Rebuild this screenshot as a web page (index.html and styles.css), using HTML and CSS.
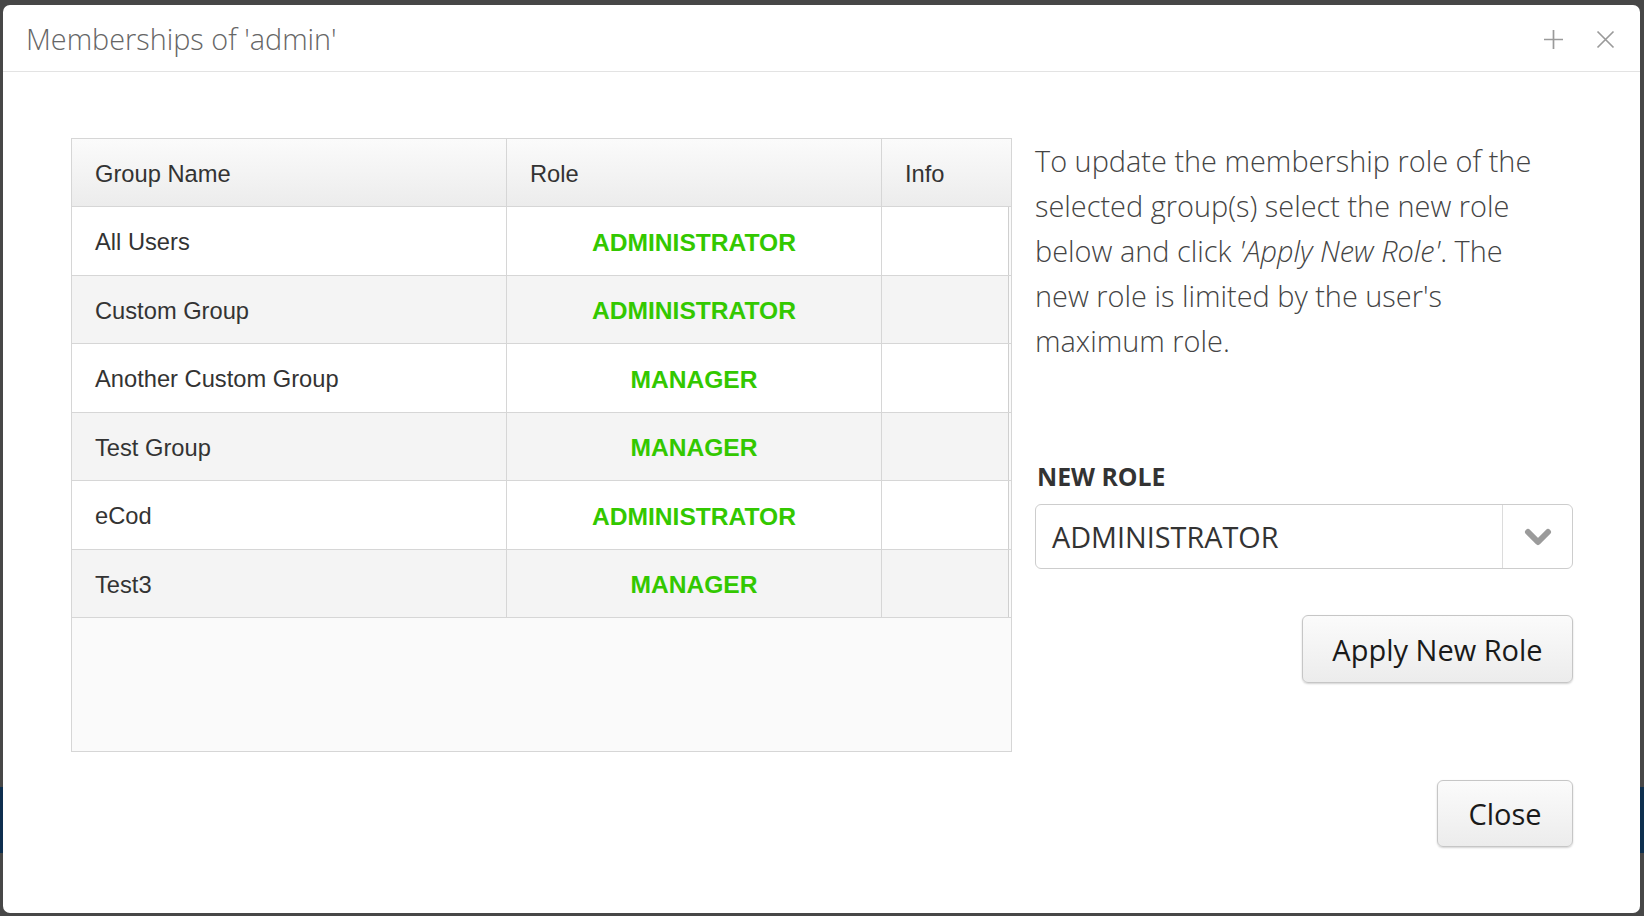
FILE: index.html
```html
<!DOCTYPE html>
<html lang="en">
<head>
<meta charset="utf-8">
<title>Memberships of 'admin'</title>
<link rel="stylesheet" href="styles.css">
</head>
<body>
<div class="modal">
  <div class="modal-header">
    <h1 class="modal-title">Memberships of 'admin'</h1>
    <div class="header-tools">
      <svg class="tool-icon" width="21" height="21" viewBox="0 0 21 21"><path d="M10.5 1v19M1 10.5h19" stroke="#9a9a9a" stroke-width="1.7" fill="none"/></svg>
      <svg class="tool-icon" width="19" height="19" viewBox="0 0 19 19"><path d="M1.5 1.5l16 16M17.5 1.5l-16 16" stroke="#9a9a9a" stroke-width="1.7" fill="none"/></svg>
    </div>
  </div>
  <div class="modal-body">
    <div class="table-box">
      <table class="groups">
        <colgroup><col class="c1"><col class="c2"><col class="c3"></colgroup>
        <thead>
          <tr><th>Group Name</th><th>Role</th><th>Info</th></tr>
        </thead>
        <tbody>
          <tr><td>All Users</td><td class="role">ADMINISTRATOR</td><td class="info"></td></tr>
          <tr><td>Custom Group</td><td class="role">ADMINISTRATOR</td><td class="info"></td></tr>
          <tr><td>Another Custom Group</td><td class="role">MANAGER</td><td class="info"></td></tr>
          <tr><td>Test Group</td><td class="role">MANAGER</td><td class="info"></td></tr>
          <tr><td>eCod</td><td class="role">ADMINISTRATOR</td><td class="info"></td></tr>
          <tr><td>Test3</td><td class="role">MANAGER</td><td class="info"></td></tr>
        </tbody>
      </table>
    </div>
    <div class="side">
      <p class="help">To update the membership role of the selected group(s) select the new role below and click <em>'Apply New Role'</em>. The new role is limited by the user's maximum role.</p>
      <div class="field-label">NEW ROLE</div>
      <div class="select">
        <span class="select-value">ADMINISTRATOR</span>
        <span class="select-arrow">
          <svg width="30" height="20" viewBox="0 0 30 20"><path d="M5 5l10 10 10-10" stroke="#9b9b9b" stroke-width="6" stroke-linecap="round" stroke-linejoin="round" fill="none"/></svg>
        </span>
      </div>
      <div class="side-actions">
        <button class="btn btn-apply">Apply New Role</button>
      </div>
    </div>
  </div>
  <div class="modal-footer">
    <button class="btn btn-close">Close</button>
  </div>
</div>
</body>
</html>
```

FILE: styles.css
```css
* { box-sizing: border-box; }

html, body { height: 100%; }

body {
  margin: 0;
  background: linear-gradient(to bottom, #474747 0, #474747 787px, #0e2f4f 787px, #0e2f4f 853px, #474747 853px);
  font-family: "Open Sans", "Liberation Sans", sans-serif;
  overflow: hidden;
}

.modal {
  margin: 5px 4px 0 3px;
  width: 1637px;
  height: 908px;
  background: #fff;
  border-radius: 7px;
  display: flex;
  flex-direction: column;
}

.modal-header {
  height: 67px;
  border-bottom: 1px solid #e3e3e3;
  display: flex;
  align-items: center;
  justify-content: space-between;
  padding: 0 25px 0 23px;
  flex: none;
}

.modal-title {
  margin: 0;
  font-weight: 300;
  font-size: 28.8px;
  color: #666;
}

.header-tools {
  display: flex;
  align-items: center;
  gap: 32px;
  padding-top: 2px;
}

.tool-icon { display: block; }

.modal-body {
  display: flex;
  gap: 23px;
  padding: 66px 67px 0 68px;
  flex: none;
}

.table-box {
  width: 941px;
  height: 614px;
  border: 1px solid #d6d6d6;
  background: #fafafa;
  flex: none;
}

.groups {
  width: 100%;
  border-collapse: separate;
  border-spacing: 0;
  table-layout: fixed;
  font-family: "Liberation Sans", Arial, sans-serif;
  font-size: 23.7px;
  color: #333;
}

.c1 { width: 435px; }
.c2 { width: 375px; }

.groups th,
.groups td {
  height: 68.5px;
  padding: 4px 0 0 23px;
  border-right: 1px solid #d6d6d6;
  border-bottom: 1px solid #d6d6d6;
  text-align: left;
  vertical-align: middle;
  font-weight: normal;
}

.groups th:last-child { border-right: none; }

.groups thead th {
  height: 68px;
  background: linear-gradient(to bottom, #fbfbfb, #ececec);
}

.groups tbody tr:nth-child(odd) td { background-color: #fff; }
.groups tbody tr:nth-child(even) td { background-color: #f4f4f4; }

.groups td.role {
  text-align: center;
  padding: 4px 0 0 0;
  font-weight: bold;
  font-size: 24.6px;
  color: #33c800;
}

.groups td.info {
  border-right: none;
  box-shadow: inset -2px 0 0 #fafafa, inset -3px 0 0 #cfcfcf;
}

.side {
  width: 538px;
  flex: none;
  display: flex;
  flex-direction: column;
}

.help {
  margin: 0;
  max-width: 510px;
  font-size: 28.9px;
  font-weight: 300;
  line-height: 45px;
  color: #444;
}

.help em { font-style: italic; }

.field-label {
  margin-top: 98px;
  margin-bottom: 13px;
  padding-left: 2px;
  font-size: 24.8px;
  line-height: 30px;
  font-weight: 700;
  color: #333;
}

.select {
  height: 65px;
  border: 1px solid #cdcdcd;
  border-radius: 6px;
  display: flex;
  align-items: stretch;
  background: #fff;
}

.select-value {
  flex: 1;
  display: flex;
  align-items: center;
  padding-left: 16px;
  font-size: 28.8px;
  color: #333;
}

.select-arrow {
  width: 70px;
  border-left: 1px solid #dcdcdc;
  display: flex;
  align-items: center;
  justify-content: center;
}

.select-arrow svg { display: block; }

.side-actions {
  display: flex;
  justify-content: flex-end;
  margin-top: 46px;
}

.btn {
  font-family: "Open Sans", "Liberation Sans", sans-serif;
  font-size: 29px;
  color: #1a1a1a;
  background: linear-gradient(to bottom, #fbfbfb, #ececec);
  border: 1px solid #c6c6c6;
  border-radius: 6px;
  box-shadow: 0 1px 2px rgba(0, 0, 0, 0.18);
  padding: 0;
  cursor: pointer;
}

.btn-apply {
  width: 271px;
  height: 68px;
}

.modal-footer {
  display: flex;
  justify-content: flex-end;
  padding: 28px 67px 0 0;
}

.btn-close {
  width: 136px;
  height: 67px;
}
```
